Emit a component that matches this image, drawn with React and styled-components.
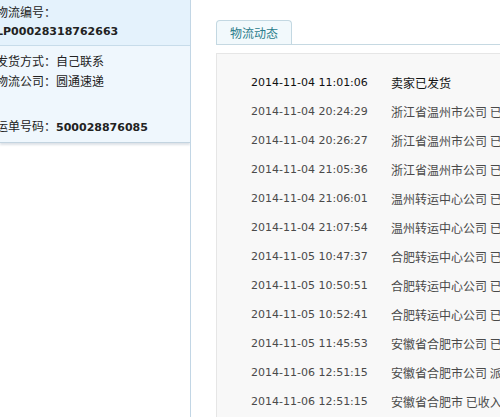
import React from "react";
import styled, { createGlobalStyle } from "styled-components";

const GlobalStyle = createGlobalStyle`
  html, body {
    margin: 0;
    padding: 0;
    background: #fff;
    overflow: hidden;
  }
  body {
    font-family: "DejaVu Sans", "Noto Sans CJK SC", sans-serif;
  }
`;

const tracks = [
  { time: "2014-11-04 11:01:06", text: "卖家已发货", first: true },
  { time: "2014-11-04 20:24:29", text: "浙江省温州市公司 已收件" },
  { time: "2014-11-04 20:26:27", text: "浙江省温州市公司 已打包" },
  { time: "2014-11-04 21:05:36", text: "浙江省温州市公司 已发出" },
  { time: "2014-11-04 21:06:01", text: "温州转运中心公司 已收入" },
  { time: "2014-11-04 21:07:54", text: "温州转运中心公司 已发出" },
  { time: "2014-11-05 10:47:37", text: "合肥转运中心公司 已收入" },
  { time: "2014-11-05 10:50:51", text: "合肥转运中心公司 已打包" },
  { time: "2014-11-05 10:52:41", text: "合肥转运中心公司 已发出" },
  { time: "2014-11-05 11:45:53", text: "安徽省合肥市公司 已收入" },
  { time: "2014-11-06 12:51:15", text: "安徽省合肥市公司 派件中" },
  { time: "2014-11-06 12:51:15", text: "安徽省合肥市 已收入" },
];

function App() {
  return (
    <>
      <GlobalStyle />
      <Page>
        <Sidebar>
          <InfoHead>
            <Line>物流编号：</Line>
            <Line>
              <Num>LP00028318762663</Num>
            </Line>
          </InfoHead>
          <InfoBody>
            <Line>发货方式：自己联系</Line>
            <Line>物流公司：圆通速递</Line>
            <Line $gap>
              运单号码：<Num>500028876085</Num>
            </Line>
          </InfoBody>
        </Sidebar>

        <Main>
          <TabBar>
            <Tab>物流动态</Tab>
          </TabBar>
          <TrackBox>
            {tracks.map((t, i) => (
              <Row key={i} $first={t.first}>
                <Time>{t.time}</Time>
                <Desc>{t.text}</Desc>
              </Row>
            ))}
          </TrackBox>
        </Main>
      </Page>
    </>
  );
}

export default App;

const Page = styled.div`
  display: flex;
  width: 500px;
  height: 417px;
  overflow: hidden;
  background: #fff;
`;

const Sidebar = styled.div`
  width: 190px;
  flex-shrink: 0;
  border-right: 1px solid #c2d6e5;
  overflow: hidden;
`;

const InfoHead = styled.div`
  display: flex;
  flex-direction: column;
  height: 42px;
  padding-top: 3px;
  background: #e4f2fc;
  border-bottom: 1px solid #c7dcea;
`;

const InfoBody = styled.div`
  display: flex;
  flex-direction: column;
  gap: 2px;
  height: 90px;
  padding-top: 6px;
  background: #eff7fd;
  border-bottom: 1px solid #c3d4e0;
  box-shadow: 0 2px 2px rgba(120, 140, 160, 0.25);
`;

const Line = styled.div`
  margin-left: -4px;
  margin-top: ${(p) => (p.$gap ? "25px" : "0")};
  height: 18px;
  line-height: 18px;
  font-family: "Noto Sans CJK SC", sans-serif;
  font-size: 12px;
  color: #222;
  white-space: nowrap;
`;

const Num = styled.span`
  font-family: "DejaVu Sans", sans-serif;
  font-weight: bold;
  font-size: 11px;
  color: #222;
`;

const Main = styled.div`
  flex: 1;
  min-width: 0;
  padding: 20px 0 0 25px;
`;

const TabBar = styled.div`
  display: flex;
  height: 24px;
  border-bottom: 1px solid #c6d9e2;
`;

const Tab = styled.div`
  width: 76px;
  height: 24px;
  box-sizing: border-box;
  border: 1px solid #c3d8e2;
  border-bottom: none;
  border-radius: 4px 4px 0 0;
  background: #f2f9fc;
  color: #2a7c8b;
  font-family: "Noto Sans CJK SC", sans-serif;
  font-size: 12px;
  line-height: 23px;
  text-align: center;
  margin-bottom: -1px;
`;

const TrackBox = styled.div`
  margin-top: 8px;
  padding-top: 14px;
  height: 400px;
  background: #f8f8f8;
  border: 1px solid #e6e6e6;
  border-right: none;
`;

const Row = styled.div`
  display: flex;
  align-items: center;
  height: 29px;
  padding-left: 34px;
  white-space: nowrap;
  color: ${(p) => (p.$first ? "#111" : "#4a4a4a")};
`;

const Time = styled.span`
  width: 140px;
  flex-shrink: 0;
  font-family: "DejaVu Sans", sans-serif;
  font-size: 11px;
`;

const Desc = styled.span`
  font-family: "Noto Sans CJK SC", sans-serif;
  font-size: 12px;
`;
